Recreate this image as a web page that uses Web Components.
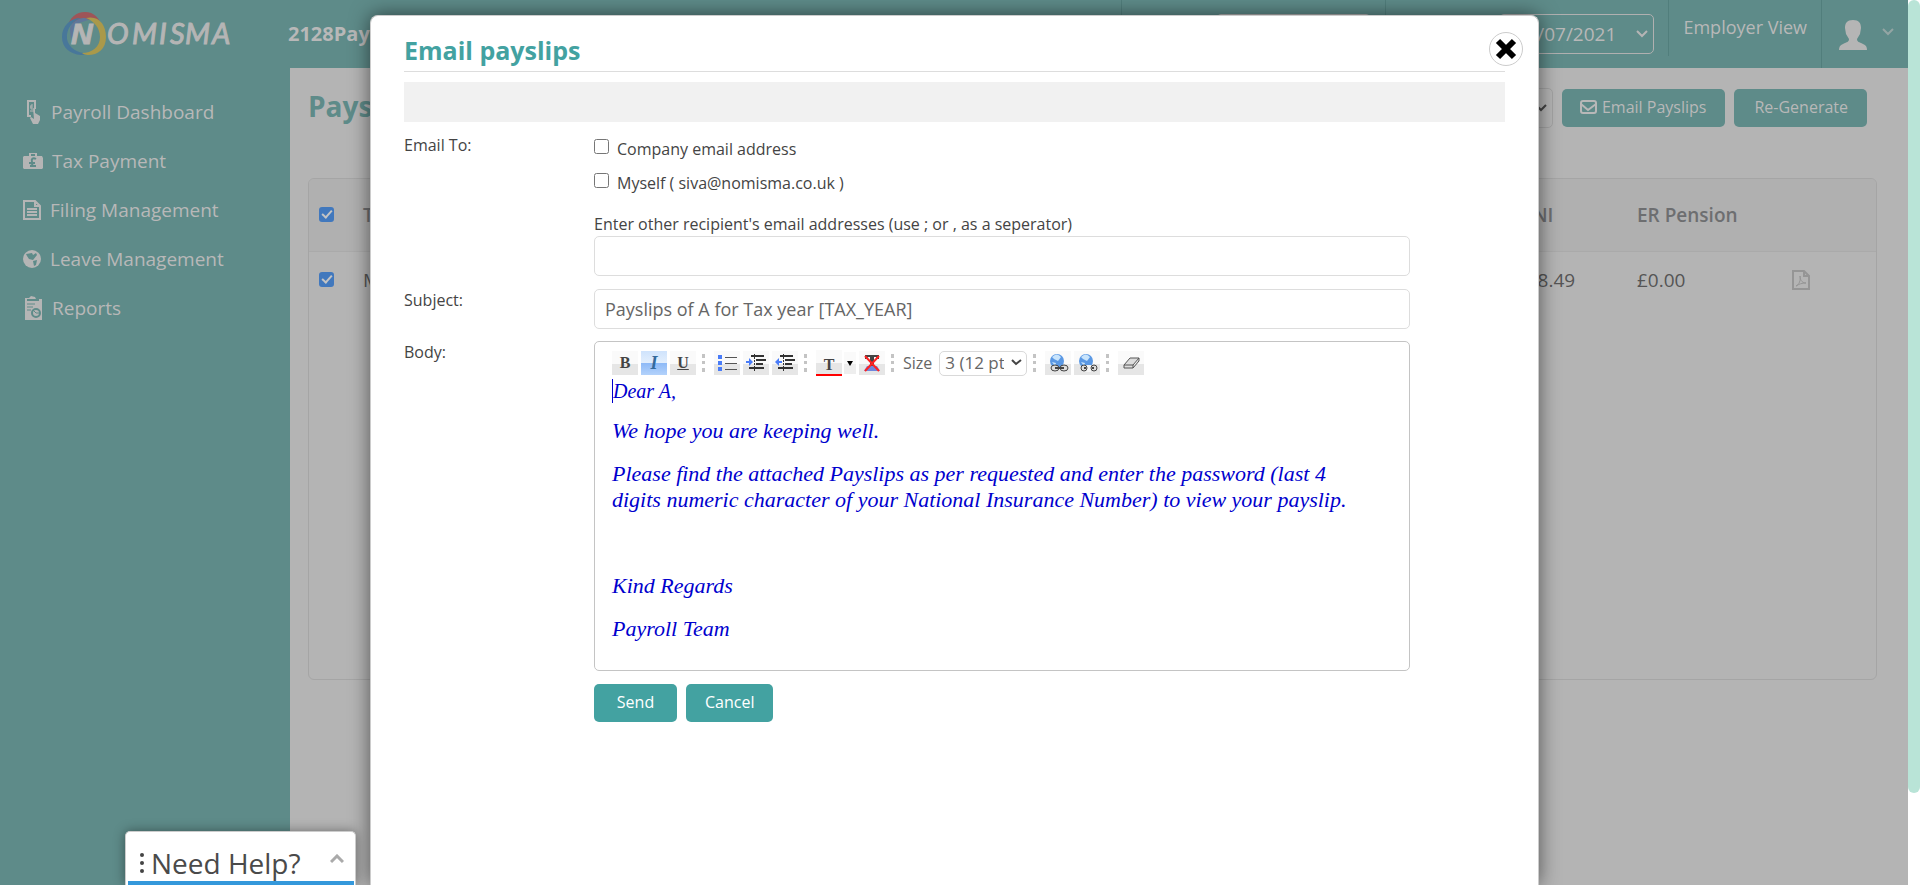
<!DOCTYPE html>
<html lang="en">
<head>
<meta charset="utf-8">
<title>Email payslips</title>
<style>
html, body { margin: 0; height: 100%; }
body { font-family: "Open Sans", "Noto Sans", sans-serif; background: #b4b4b4; overflow: hidden; }
</style>
</head>
<body>
<payroll-app></payroll-app>
<script>
const define = (name, html) => {
  const t = document.createElement('template');
  t.innerHTML = html;
  customElements.define(name, class extends HTMLElement {
    constructor() {
      super();
      this.attachShadow({ mode: 'open' }).append(t.content.cloneNode(true));
    }
  });
};

define('nomisma-logo', `
<style>
:host { display: block; width: 172px; height: 48px; }
svg { display: block; }
text { font: italic 29px Lato, sans-serif; fill: #b5b5b5; stroke: #b5b5b5; stroke-width: 1; }
.n { font: italic 700 30px "Liberation Sans", sans-serif; }
</style>
<svg width="172" height="48" role="img" aria-label="Nomisma">
  <path fill="#9e5558" d="M5 18C8 7 14 2 23 2s15 6 17 16C34 7 16 6 5 18z"/>
  <path fill="#48779a" d="M19 8C8 8 0 16 0 27s8 17 19 18c3 0 6-1 8-2-10 1-20-4-22-14C4 18 11 11 19 8z"/>
  <path fill="#5f779a" d="M21 8c-7 1-13 6-13 12l1 10 8-17 9-3c-1-2-3-2-5-2z"/>
  <path fill="#aa994a" d="M24 8c13-3 20 7 20 19s-8 18-18 18c-2 0-5-1-6-2 10 0 18-6 18-16 0-9-6-16-14-19z"/>
  <text class="n" x="9" y="34">N</text>
  <text x="45" y="34">O</text>
  <text x="70" y="34">M</text>
  <text x="97" y="34">I</text>
  <text x="108" y="34">S</text>
  <text x="123" y="34">M</text>
  <text x="150" y="34">A</text>
</svg>`);

define('nav-item', `
<style>
:host { display: block; }
a { display: flex; align-items: center; gap: 9px; height: 49px; color: #b8b8b8; text-decoration: none; font-size: 19px; }
</style>
<a href="#"><slot name="icon"></slot><span><slot></slot></span></a>`);

define('side-nav', `
<style>
:host { display: block; box-sizing: border-box; width: 290px; flex: none; background: #5e8b89; padding: 10px 0 0 62px; }
nav { margin: 29px 0 0 -39px; }
svg { display: block; fill: #b5b5b5; flex: none; }
</style>
<nomisma-logo></nomisma-logo>
<nav>
<nav-item><svg slot="icon" width="19" height="24"><path fill="none" stroke="#b5b5b5" stroke-width="2" d="M12 9V1H5v15h3"/><path d="M4 0h3L4 3zM10 0h3v3zM4 17v-3l3 3z"/><path fill="none" stroke="#b5b5b5" d="M10 5H8v4h2M7 7h3M7 11h4"/><path d="M10 8l2 1v4l5 3v4l-2 4h-5l-3-6 1-1 3 2z"/></svg>Payroll Dashboard</nav-item>
<nav-item><svg slot="icon" width="20" height="18"><path fill-rule="evenodd" d="M6 4V1h8v3h5l1 2v10l-1 1H1l-1-1V5l1-1zm2 0h4V2H8z"/><path d="M13 7c-3-2-5 0-4 3s0 4-2 4h6M6 11h6" fill="none" stroke="#5e8b89" stroke-width="2"/></svg>Tax Payment</nav-item>
<nav-item><svg slot="icon" width="18" height="20"><path fill="none" stroke="#b5b5b5" stroke-width="2" d="M1 1h11l5 5v13H1zM12 1v5h5M4 9h10M4 12h10M4 15h10"/></svg>Filing Management</nav-item>
<nav-item><svg slot="icon" width="18" height="18"><circle cx="9" cy="9" r="9"/><path fill="#5e8b89" d="M3 4l6-1 1 2 3-2 1 2-4 5-4-1-2-3zm7 7l4-1-1 5-2 1z"/></svg>Leave Management</nav-item>
<nav-item><svg slot="icon" width="20" height="24"><path d="M2 2h4l2-2 4 1 1 2h6v21H2z"/><g fill="none" stroke="#5e8b89"><path stroke-width="2" d="M4 4h12"/><path d="M4 8h8M4 11h6M4 14h4"/><circle cx="13" cy="17" r="4" stroke-width="2"/><path d="M10 14l3 3h4"/></g></svg>Reports</nav-item>
</nav>`);

define('top-bar', `
<style>
:host { display: flex; height: 68px; background: #5e8b89; color: #b8b8b8; font-size: 18px; justify-content: space-between; }
h2 { margin: 0 0 0 -2px; font-size: 20px; font-weight: 700; line-height: 68px; }
.r { display: flex; }
.cell { border-left: 1px solid #517e7c; box-sizing: border-box; height: 56px; display: flex; align-items: flex-start; padding: 14px 14px 0; }
.cell.user { height: 68px; padding: 20px 14px 0 17px; gap: 15px; }
.company { width: 264px; justify-content: flex-end; }
.period { width: 283px; justify-content: flex-end; }
select { appearance: none; box-sizing: border-box; font: 19px "Open Sans", sans-serif; color: #b8b8b8; background: #5e8b89; border: 1px solid #b0b0b0; border-radius: 5px; height: 40px; width: 155px; padding: 0 12px 0 15px; }
.pick { display: grid; } .pick > * { grid-area: 1/1; }
.pick svg { justify-self: end; align-self: center; margin-right: 5px; }
a { color: inherit; text-decoration: none; line-height: 27px; }
svg { fill: none; stroke: #b5b5b5; stroke-width: 2; }
</style>
<h2>2128Payslip</h2>
<div class="r">
<div class="cell company"><select aria-label="Company"><option></option></select></div>
<div class="cell period"><div class="pick"><select aria-label="Period"><option>31/07/2021</option></select><svg width="14" height="10"><path d="M2 2l5 5 5-5"/></svg></div></div>
<div class="cell"><a href="#">Employer View</a></div>
<div class="cell user"><svg width="28" height="30"><path fill="#b5b5b5" stroke="none" d="M14 0c6 0 8 3 8 8l-1 6-3 5c0 3 2 3 6 5 3 1 4 3 4 6H0c0-3 1-5 4-6 4-2 6-2 6-5l-3-5-1-6c0-5 2-8 8-8z"/></svg><svg width="12" height="18"><path stroke="#93a5a4" d="M1 9l5 5 5-5"/></svg></div>
</div>`);

define('payslip-table', `
<style>
:host { display: block; border: 1px solid #a5a5a5; border-radius: 6px; min-height: 500px; overflow: hidden; color: #555; }
table { width: 100%; border-collapse: collapse; table-layout: fixed; font-size: 19px; text-align: left; }
th { height: 72px; padding: 0; background: #b0b0b0; font-weight: 600; font-size: 19px; color: #6d6e70; border-bottom: 1px solid #aaa; }
td { height: 56px; padding: 0; }
.ck { padding: 0 0 2px 10px; box-sizing: border-box; }
input { appearance: none; display: block; width: 15px; height: 15px; margin: 0; border-radius: 3px; background: #4178bd; }
input::before { content: ""; display: block; box-sizing: border-box; width: 6px; height: 10px; margin: 1px 0 0 5px; border: solid #c4c4c4; border-width: 0 2px 2px 0; transform: rotate(42deg); }
svg { display: block; fill: none; stroke: #959595; stroke-width: 2; margin-left: 2px; }
</style>
<table>
<colgroup><col style="width:54px"><col><col style="width:132px"><col style="width:153px"><col style="width:86px"></colgroup>
<tr><th class="ck"><input type="checkbox" checked aria-label="Select all"></th><th>Title</th><th>ER NI</th><th>ER Pension</th><th></th></tr>
<tr><td class="ck"><input type="checkbox" checked aria-label="Select row"></td><td>Mr</td><td>£108.49</td><td>£0.00</td><td><svg width="18" height="20"><path d="M1 1h11l5 5v13H1zM12 1v5h5"/><path stroke-width="1" d="M4 16c3-1 5-6 4-10 0 5 3 7 6 7-4 0-7 1-10 3z"/></svg></td></tr>
</table>`);

define('page-main', `
<style>
:host { display: block; padding: 20px 31px 0 18px; }
header { display: flex; align-items: flex-start; height: 90px; gap: 9px; }
h1 { margin: 0 auto 0 0; font-size: 28px; line-height: 36px; font-weight: 700; color: #5e8b89; }
button { height: 38px; margin-top: 1px; border: 0; border-radius: 5px; background: #5e8b89; color: #b8b8b8; font: 16px "Open Sans", sans-serif; display: flex; align-items: center; justify-content: center; gap: 5px; padding: 0 19px 2px 18px; }
.re { padding: 0 19px 2px 20px; margin-right: 10px; }
.pick { display: grid; } .pick > * { grid-area: 1/1; }
select { appearance: none; width: 150px; height: 40px; box-sizing: border-box; border: 1px solid #a3a3a3; border-radius: 5px; background: none; }
svg { fill: none; stroke: #b8b8b8; stroke-width: 2; }
.pick svg { stroke: #444; justify-self: end; align-self: center; margin-right: 5px; }
</style>
<header><h1>Payslips</h1>
<div class="pick"><select aria-label="Action"><option></option></select><svg width="14" height="10"><path d="M2 2l5 5 5-5"/></svg></div>
<button type="button"><svg width="17" height="14"><rect x="1" y="1" width="15" height="12" rx="2"/><path d="M1 4l7 6 8-6"/></svg>Email Payslips</button>
<button type="button" class="re">Re-Generate</button></header>
<payslip-table></payslip-table>`);

define('tool-button', `
<style>
:host { display: block; }
button { display: grid; place-items: center; width: 26px; height: 24px; padding: 0; border: 0; background: linear-gradient(#fafafa 55%, #e6e6e6 55%); font: 700 16px "Liberation Serif", serif; color: #444; }
:host([active]) button { background: linear-gradient(#cfe3fc, #e3effd 50%, #8ebaf7 51%, #b3d2fb); font-style: italic; color: #346a9c; font-size: 18px; }
:host([line]) button { border-bottom: 2px solid red; padding-top: 6px; height: 26px; }
</style>
<button type="button"><slot></slot></button>`);

define('tool-sep', `
<style>:host { display: block; width: 0; height: 18px; border-left: 3px dotted #c4c4c4; }</style>`);

define('edit-toolbar', `
<style>
:host { display: flex; align-items: center; height: 26px; margin-bottom: 3px; font-size: 16px; color: #666; }
svg { display: block; }
tool-button + tool-button { margin-left: 3px; }
tool-sep { margin: 0 9px 0 6px; }
.drop { width: 12px; margin: 0 3px 0 2px; border: 0; padding: 0; background: linear-gradient(#fafafa 55%, #eee 55%); height: 22px; }
.size { display: flex; align-items: center; gap: 7px; }
.pick { display: grid; } .pick > * { grid-area: 1/1; }
.pick svg { justify-self: end; align-self: center; margin-right: 4px; }
select { appearance: none; box-sizing: border-box; width: 88px; height: 25px; border: 1px solid #d9d9d9; border-radius: 5px; background: #fff; padding: 0 22px 0 5px; font: 17px/22px "Open Sans", sans-serif; color: #666; }
</style>
<tool-button>B</tool-button><tool-button active>I</tool-button><tool-button><u>U</u></tool-button>
<tool-sep></tool-sep>
<tool-button><svg width="20" height="18"><path fill="#4a7cf8" d="M1 1h4v4H1zm0 6h4v4H1zm0 6h4v4H1z"/><path stroke="#555" d="M8 3.500h12M8 9.500h12M8 15.500h12"/></svg></tool-button>
<tool-button><svg width="20" height="18"><path stroke="#333" stroke-width="2" d="M5 2h13M10 6h10M10 10h7M3 14h15"/><path stroke="#333" stroke-dasharray="2 1" d="M8.500 0v18"/><path fill="#4a7cf8" d="M0 7h3V4l4 4-4 4V9H0z"/></svg></tool-button>
<tool-button><svg width="20" height="18"><path stroke="#333" stroke-width="2" d="M5 2h13M10 6h10M10 10h7M3 14h15"/><path stroke="#333" stroke-dasharray="2 1" d="M8.500 0v18"/><path fill="#4a7cf8" d="M7 7H4V4L0 8l4 4V9h3z"/></svg></tool-button>
<tool-sep></tool-sep>
<tool-button line>T</tool-button>
<button class="drop" type="button" aria-label="Text colour"><svg width="12" height="8"><path d="M3 2h6L6 7z"/></svg></button>
<tool-button><svg width="18" height="18"><path fill="#444" d="M2 1h14v4h-2l-1-2h-2v9H7V3H5L4 5H2z"/><path fill="#6f86dd" d="M4 12h10l3 5H1z"/><path stroke="#f22" stroke-width="2" d="M2 2l14 15M16 2L2 17"/></svg></tool-button>
<tool-sep></tool-sep>
<div class="size"><label for="size">Size</label><span class="pick"><select id="size"><option>3 (12 pt)</option></select><svg width="14" height="10"><path fill="none" stroke="#444" stroke-width="2" d="M3 2l4 4 5-4"/></svg></span></div>
<tool-sep></tool-sep>
<tool-button><svg width="22" height="20"><circle cx="10" cy="8" r="7" fill="#5a98e4"/><path fill="#c8e4fc" d="M5 4q5-5 9 0l-3 4-4-2zM5 9l4 1-1 3z"/><g fill="#ddd" stroke="#444"><ellipse cx="8" cy="15" rx="4" ry="3"/><ellipse cx="17" cy="15" rx="4" ry="3"/><path stroke-width="2" d="M8 15h9"/></g></svg></tool-button>
<tool-button><svg width="22" height="20"><circle cx="10" cy="8" r="7" fill="#5a98e4"/><path fill="#c8e4fc" d="M5 4q5-5 9 0l-3 4-4-2zM5 9l4 1-1 3z"/><path fill="#f4f4f4" d="M10 12h5v7h-5z"/><g fill="#ddd" stroke="#444"><ellipse cx="8" cy="15" rx="3" ry="3"/><ellipse cx="18" cy="15" rx="3" ry="3"/><path stroke-width="2" d="M8 15h2M16 15h2"/></g></svg></tool-button>
<tool-sep></tool-sep>
<tool-button><svg width="18" height="18"><path fill="#ddd" stroke="#555" d="M2 11l6-7h9l-6 7zm0 0v3h9v-3m0 3l6-7V4"/></svg></tool-button>`);

define('rich-editor', `
<style>
:host { display: block; box-sizing: border-box; height: 330px; border: 1px solid #c4c4c4; border-radius: 5px; padding: 8px 18px 0 17px; }
.doc { outline: 0; padding-right: 30px; font: italic 22px/26px "Liberation Serif", "Times New Roman", serif; color: #0000cd; }
p { margin: 0 0 17px; }
p.first { font-size: 20px; line-height: 24px; border-left: 1px solid #00c; margin-bottom: 15px; }
</style>
<edit-toolbar></edit-toolbar>
<div class="doc" contenteditable="true" role="textbox" aria-label="Body" spellcheck="false"><p class="first">Dear A,</p><p>We hope you are keeping well.</p><p>Please find the attached Payslips as per requested and enter the password (last 4 digits numeric character of your National Insurance Number) to view your payslip.</p><p>&nbsp;</p><p>Kind Regards</p><p>Payroll Team</p></div>`);

define('email-dialog', `
<style>
:host { display: block; box-sizing: border-box; background: #fff; border: 1px solid #ccc; border-bottom: 0; border-radius: 8px 8px 0 0; box-shadow: 0 0 20px rgba(0,0,0,.55); padding: 16px 33px 0 33px; color: #444; font-size: 16px; }
header { border-bottom: 1px solid #ddd; height: 39px; display: flex; justify-content: space-between; }
h1 { margin: 0; font-size: 25px; line-height: 36px; font-weight: 700; color: #43a2a1; }
.x { width: 34px; height: 34px; margin-right: -18px; border-radius: 50%; border: 1px solid #ccc; background: #fff; padding: 0; display: grid; place-items: center; }
.bar { height: 40px; background: #f1f1f1; margin: 10px 0 12px; }
.row { display: grid; grid-template-columns: 190px minmax(0, 816px); line-height: 22px; margin-bottom: 12px; }
.row.to { margin-bottom: 13px; }
.opt { display: flex; align-items: flex-start; gap: 8px; height: 34px; line-height: 30px; }
.opt input { margin: 5px 0 0; width: 15px; height: 15px; }
.other { display: block; margin-top: 10px; line-height: 24px; }
input[type=text] { box-sizing: border-box; width: 100%; height: 40px; border: 1px solid #ddd; border-radius: 5px; padding: 0 10px; font: 18px "Open Sans", sans-serif; color: #666; display: block; }
.acts { display: flex; gap: 9px; margin: 13px 0 0 190px; }
.acts button { height: 38px; border: 0; border-radius: 5px; background: #43a2a1; color: #fff; font: 16px "Open Sans", sans-serif; padding: 0 19px 2px; min-width: 83px; }
</style>
<header><h1>Email payslips</h1><button class="x" type="button" aria-label="Close"><svg width="22" height="22"><path stroke="#000" stroke-width="6" d="M3 3l16 16M19 3L3 19"/></svg></button></header>
<div class="bar"></div>
<div class="row to"><span>Email To:</span><div>
<div class="opt"><input type="checkbox" id="c"><label for="c">Company email address</label></div>
<div class="opt"><input type="checkbox" id="m"><label for="m">Myself ( siva@nomisma.co.uk )</label></div>
<label class="other" for="o">Enter other recipient's email addresses (use ; or , as a seperator)</label><input type="text" id="o"></div></div>
<div class="row"><label for="s">Subject:</label><input type="text" id="s" value="Payslips of A for Tax year [TAX_YEAR]"></div>
<div class="row"><span>Body:</span><rich-editor></rich-editor></div>
<div class="acts"><button type="button">Send</button><button type="button">Cancel</button></div>`);

define('help-tab', `
<style>
:host { display: block; }
button { box-sizing: border-box; width: 231px; height: 54px; border: 1px solid #ccc; border-bottom: 0; border-radius: 5px 5px 0 0; background: #fff; box-shadow: 0 0 12px rgba(0,0,0,.4); padding: 0 1px 0 2px; display: block; }
.in { display: flex; align-items: center; height: 49px; padding: 13px 10px 0 12px; box-sizing: border-box; font: 28px/34px "Open Sans", sans-serif; color: #4a4a4a; gap: 7px; }
.line { display: block; height: 4px; background: #3498db; }
.up { margin: -8px 0 0 auto; }
svg { flex: none; }
</style>
<button type="button"><span class="in"><svg width="4" height="20" fill="#444"><circle cx="2" cy="2" r="2"/><circle cx="2" cy="10" r="2"/><circle cx="2" cy="18" r="2"/></svg><span>Need Help?</span><svg class="up" width="14" height="10"><path fill="none" stroke="#aaa" stroke-width="3" d="M1 8l6-6 6 6"/></svg></span><span class="line"></span></button>`);

define('payroll-app', `
<style>
:host { display: flex; height: 100vh; overflow: hidden; position: relative; }
.page { flex: 1; min-width: 0; }
.scroll { width: 12px; background: #fff; flex: none; }
.scroll i { display: block; height: 793px; border-radius: 6px; background: #b9e4d7; }
email-dialog { position: absolute; top: 15px; bottom: 0; left: 370px; right: 381px; }
help-tab { position: absolute; left: 125px; bottom: 0; }
</style>
<side-nav></side-nav>
<div class="page"><top-bar></top-bar><page-main></page-main></div>
<div class="scroll"><i></i></div>
<email-dialog role="dialog" aria-label="Email payslips"></email-dialog>
<help-tab></help-tab>`);
</script>
</body>
</html>
